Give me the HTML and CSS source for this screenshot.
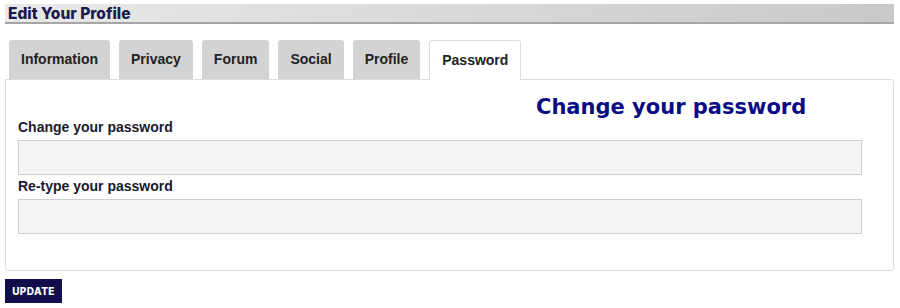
FILE: index.html
```html
<!DOCTYPE html>
<html lang="en">
<head>
  <meta charset="UTF-8" />
  <meta name="viewport" content="width=device-width, initial-scale=1.0"/>
  <title>Edit Your Profile</title>
  <link rel="stylesheet" href="styles.css">
</head>
<body>
  <div class="page">
    <h3 class="bar">Edit Your Profile</h3>

    <ul class="tabs">
      <li>Information</li>
      <li>Privacy</li>
      <li>Forum</li>
      <li>Social</li>
      <li>Profile</li>
      <li class="active">Password</li>
    </ul>

    <form class="panel" id="pwForm">
      <h2 class="title">Change your password</h2>
      <label for="pw1">Change your password</label>
      <input type="password" id="pw1" name="pw1" />
      <label for="pw2">Re-type your password</label>
      <input type="password" id="pw2" name="pw2" />
    </form>

    <button type="submit" form="pwForm" class="update">UPDATE</button>
  </div>
</body>
</html>
```

FILE: styles.css
```css
body {
  margin: 0;
  font-family: "Liberation Sans", Arial, sans-serif;
  background: white;
}
.page {
  padding: 4px 6px 0 5px;
}
.bar {
  margin: 0;
  height: 18px;
  line-height: 19px;
  padding-left: 3px;
  font-family: Inter, sans-serif;
  font-size: 15.5px;
  font-weight: 800;
  color: #1b1a4c;
  background: linear-gradient(to right, #e9e9e9, #c9c9c9);
  border-bottom: 2px solid #a5a5a5;
}
.tabs {
  list-style: none;
  display: flex;
  gap: 9px;
  margin: 16px 0 0;
  padding: 0 0 0 4px;
}
.tabs li {
  height: 39px;
  line-height: 39px;
  padding: 0 12px;
  font-size: 14px;
  font-weight: bold;
  color: #222;
  background: #d3d3d3;
  border-radius: 3px 3px 0 0;
  box-sizing: border-box;
}
.tabs li.active {
  background: white;
  border: 1px solid #ddd;
  border-bottom: none;
  height: 40px;
  margin-bottom: -1px;
  position: relative;
  padding: 0 12px;
  line-height: 38px;
}
.panel {
  border: 1px solid #ddd;
  border-radius: 0 3px 3px 3px;
  padding: 0 31px 33px 12px;
}
.title {
  margin: 0;
  padding: 15px 0 0 518px;
  height: 24px;
  line-height: 24px;
  font-family: "DejaVu Sans", Verdana, sans-serif;
  font-size: 21px;
  font-weight: bold;
  color: #0b0b86;
}
label {
  display: block;
  font-size: 14px;
  font-weight: bold;
  color: #1a1a2e;
  line-height: 17px;
}
input {
  display: block;
  width: 100%;
  height: 35px;
  margin: 4px 0 3px;
  box-sizing: border-box;
  background: #f5f5f5;
  border: 1px solid #cfcfcf;
}
.update {
  margin-top: 8px;
  width: 57px;
  height: 24px;
  padding: 0;
  border: none;
  background: #120e4b;
  color: white;
  font-family: Inter, sans-serif;
  font-size: 10px;
  font-weight: 800;
  letter-spacing: 0.4px;
  cursor: pointer;
}
```
